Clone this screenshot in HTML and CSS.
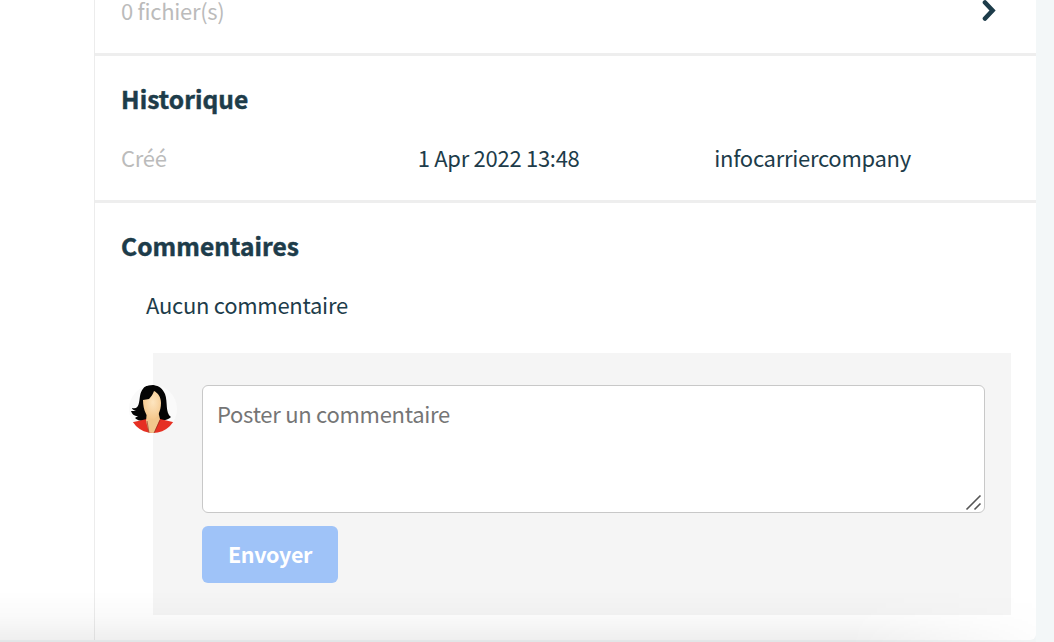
FILE: index.html
```html
<!DOCTYPE html>
<html lang="fr">

<head>
    <meta charset="UTF-8">
    <meta name="viewport" content="width=device-width, initial-scale=1.0">
    <title>Historique et commentaires</title>

    <link rel="stylesheet" href="styles.css">
</head>

<body>
    <div class="page">
        <main class="details">
            <section class="files">
                <span class="muted">0 fichier(s)</span>
                <svg class="chevron" width="16" height="22" viewBox="0 0 16 22">
                    <path d="M3 2.5 L10.5 10.5 L3 18.5" />
                </svg>
            </section>

            <section class="history">
                <h2>Historique</h2>
                <div class="history-row">
                    <span class="muted">Créé</span>
                    <span>1 Apr 2022 13:48</span>
                    <span>infocarriercompany</span>
                </div>
            </section>

            <section class="comments">
                <h2>Commentaires</h2>
                <p class="empty">Aucun commentaire</p>

                <form class="comment-form">
                    <svg class="avatar" width="48" height="48" viewBox="0 0 48 48">
                        <defs>
                            <clipPath id="round"><circle cx="24" cy="24" r="24" /></clipPath>
                            <radialGradient id="skin" cx=".55" cy=".4" r=".65">
                                <stop offset="0" stop-color="#fde5c0" />
                                <stop offset="1" stop-color="#f4c689" />
                            </radialGradient>
                        </defs>
                        <g clip-path="url(#round)">
                            <rect width="48" height="48" fill="#fafafa" />
                            <path d="M20 0 C27-1 33 2 36 9 C39 17 36 28 42 32 C39 35 34 36 30 35 L18 35 C14 37 9 36 6 33 L9 31 C5 31 3 29 2 26 L7 26 C4 25 3 24 3 23 C10 25 10 18 11 11 C12 5 15 1 20 0Z" fill="#050505" />
                            <path d="M18 34 L0 38 L0 48 L48 48 L48 38 L31 34Z" fill="#e63023" />
                            <path d="M18 26 L17 36 L20 48 L25 48 L31 34 L29 26Z" fill="#f2c68c" />
                            <path d="M14 15 L20 14 C22 12 24 9 25 6 C29 8 32 12 32 18 C32 26 28 34 24 34 C18 34 14 25 14 15Z" fill="url(#skin)" />
                            <path d="M18 36 L20 48 M31 35 L25 48" stroke="#7d2517" stroke-width=".6" />
                        </g>
                    </svg>
                    <div class="field">
                        <textarea placeholder="Poster un commentaire"></textarea>
                        <svg class="grip" width="17" height="17" viewBox="0 0 17 17">
                            <path d="M1.5 15.5 L15.5 1.5 M9.5 15.5 L15.5 9.5" />
                        </svg>
                    </div>
                    <button type="submit" disabled>Envoyer</button>
                </form>
            </section>
        </main>
        <div class="fade"></div>
    </div>
</body>

</html>
```

FILE: styles.css
```css
* {
    box-sizing: border-box;
}

body {
    margin: 0;
    height: 642px;
    overflow: hidden;
    background-color: #f3f7f8;
    color: #1d3c4a;
    font: 22px/32px "Noto Sans CJK SC", "Noto Sans", sans-serif;
    letter-spacing: -0.28px;
}

.page {
    position: relative;
    width: 1036px;
    height: 640px;
    padding-left: 94px;
    border-radius: 0 0 6px 0;
    background-color: white;
}

.details {
    height: 640px;
    border-left: 1px solid #ececec;
}

section {
    padding: 0 25px 0 26px;
}

.files,
.history {
    border-bottom: 3px solid #eee;
}

.files {
    display: flex;
    justify-content: space-between;
    height: 56px;
    padding-right: 38px;
    line-height: 20px;
}

.muted {
    color: #bbb;
}

.chevron path {
    fill: none;
    stroke: #1d3c4a;
    stroke-width: 4.6;
    stroke-linecap: round;
}

h2 {
    margin: 0;
    padding-top: 27px;
    font-size: 24.5px;
    line-height: 32px;
    letter-spacing: 0.08px;
    -webkit-text-stroke: 0.5px #1d3c4a;
}

.history {
    height: 147px;
}

.history-row {
    display: grid;
    grid-template-columns: repeat(3, 1fr);
    margin-top: 26px;
}

.empty {
    margin: 26px 0 33px 25px;
}

.comment-form {
    position: relative;
    height: 262px;
    margin-left: 32px;
    padding: 32px 26px 32px 49px;
    background-color: #f5f5f5;
}

.avatar {
    position: absolute;
    left: -24px;
    top: 32px;
}

.field {
    position: relative;
    height: 128px;
}

textarea {
    display: block;
    width: 100%;
    height: 128px;
    padding: 11px 14px;
    border: 1px solid #c8c8c8;
    border-radius: 6px;
    background-color: white;
    color: inherit;
    font: inherit;
    letter-spacing: inherit;
    resize: none;
}

textarea::placeholder {
    color: #757575;
}

.grip {
    position: absolute;
    right: 3px;
    bottom: 2px;
}

.grip path {
    stroke: #555;
    stroke-width: 1.6;
}

button {
    width: 136px;
    height: 57px;
    margin-top: 13px;
    padding: 0 0 1px;
    border: 0;
    border-radius: 6px;
    background-color: #9fc3f8;
    color: white;
    font: inherit;
    font-size: 21.5px;
    font-weight: bold;
    letter-spacing: -0.35px;
}

/* shadow along the bottom edge */
.fade {
    position: absolute;
    left: 0;
    right: 0;
    bottom: -2px;
    height: 52px;
    background: linear-gradient(to bottom, rgba(0, 0, 0, 0), rgba(0, 0, 0, 0.02) 50%, rgba(0, 0, 0, 0.065));
    -webkit-mask-image: linear-gradient(to right, black 82%, rgba(0, 0, 0, 0.15));
    mask-image: linear-gradient(to right, black 82%, rgba(0, 0, 0, 0.15));
}
```
